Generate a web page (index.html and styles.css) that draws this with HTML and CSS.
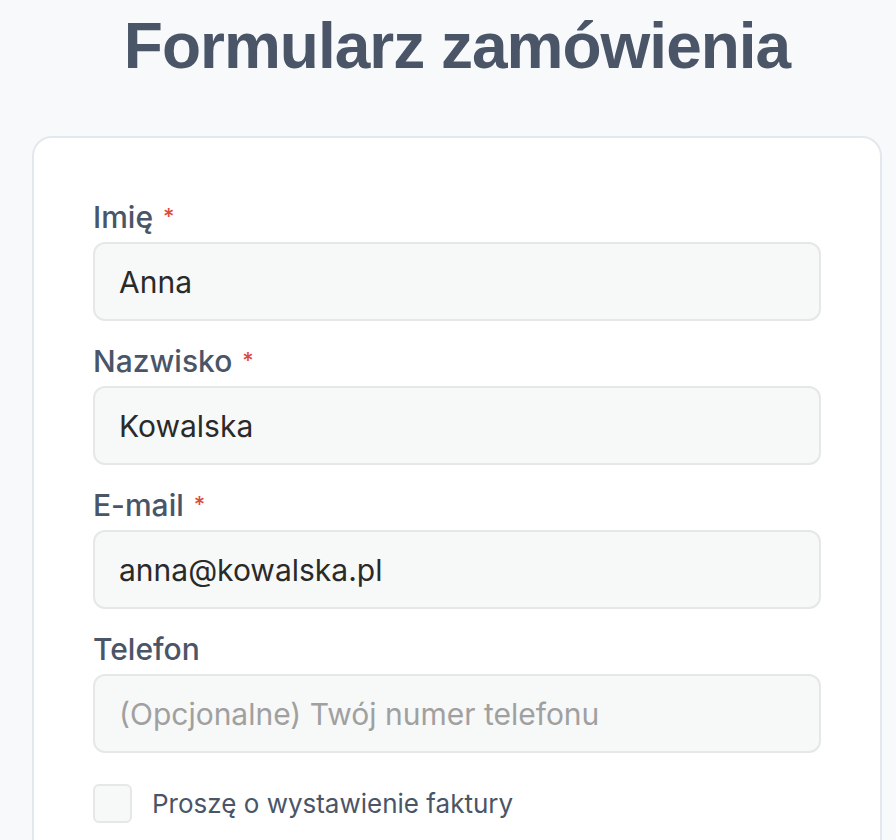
FILE: index.html
```html
<!DOCTYPE html>
<html lang="pl">
<head>
<meta charset="utf-8">
<title>Formularz zamówienia</title>
<link rel="stylesheet" href="styles.css">
</head>
<body>
<div class="page">
  <h1 class="title">Formularz zamówienia</h1>
  <form class="card">
    <div class="field">
      <label class="label" for="imie">Imię <span class="req">*</span></label>
      <input class="input" id="imie" type="text" value="Anna">
    </div>
    <div class="field">
      <label class="label" for="nazwisko">Nazwisko <span class="req">*</span></label>
      <input class="input" id="nazwisko" type="text" value="Kowalska">
    </div>
    <div class="field">
      <label class="label" for="email">E-mail <span class="req">*</span></label>
      <input class="input" id="email" type="email" value="anna@kowalska.pl">
    </div>
    <div class="field">
      <label class="label" for="tel">Telefon</label>
      <input class="input" id="tel" type="tel" placeholder="(Opcjonalne) Twój numer telefonu">
    </div>
    <label class="check-row">
      <span class="checkbox"></span>
      <span class="check-text">Proszę o wystawienie faktury</span>
    </label>
  </form>
</div>
</body>
</html>
```
FILE: styles.css
```css
html, body {
  margin: 0;
  padding: 0;
}
body {
  background: #f8f9fb;
  font-family: Inter, "Noto Sans", sans-serif;
  overflow: hidden;
}
.page {
  padding: 0 14px 0 32px;
}
.title {
  margin: 0;
  padding-top: 8px;
  font-family: "Liberation Sans", Arial, sans-serif;
  font-weight: 700;
  font-size: 64px;
  line-height: 1.2;
  letter-spacing: -1px;
  color: #4a5568;
  text-align: center;
}
.card {
  margin-top: 51px;
  background: #ffffff;
  border: 2px solid #e3e8ef;
  border-radius: 20px;
  padding: 59px 59px 60px;
  display: flex;
  flex-direction: column;
  gap: 20px;
}
.field {
  display: flex;
  flex-direction: column;
  gap: 5px;
}
.label {
  display: block;
  height: 40px;
  font-size: 30px;
  line-height: 40px;
  font-weight: 500;
  color: #4a5568;
}
.req {
  color: #e0483e;
  font-size: 22px;
  line-height: 0;
  vertical-align: 4px;
  margin-left: 2px;
}
.input {
  box-sizing: border-box;
  height: 79px;
  width: 100%;
  margin: 0;
  border: 2px solid #e5e7e8;
  border-radius: 12px;
  background: #f7f8f8;
  padding: 2px 24px 0;
  font-family: Inter, "Noto Sans", sans-serif;
  font-size: 30px;
  color: #2a2a2a;
  outline: none;
}
.input::placeholder {
  color: #a0a0a0;
  opacity: 1;
}
.check-row {
  display: flex;
  align-items: center;
  gap: 20px;
  margin-top: 11px;
}
.checkbox {
  box-sizing: border-box;
  width: 39px;
  height: 39px;
  border: 2px solid #e5e7e8;
  border-radius: 6px;
  background: #f7f8f8;
  flex: none;
}
.check-text {
  font-size: 26px;
  color: #4a5568;
}
```
